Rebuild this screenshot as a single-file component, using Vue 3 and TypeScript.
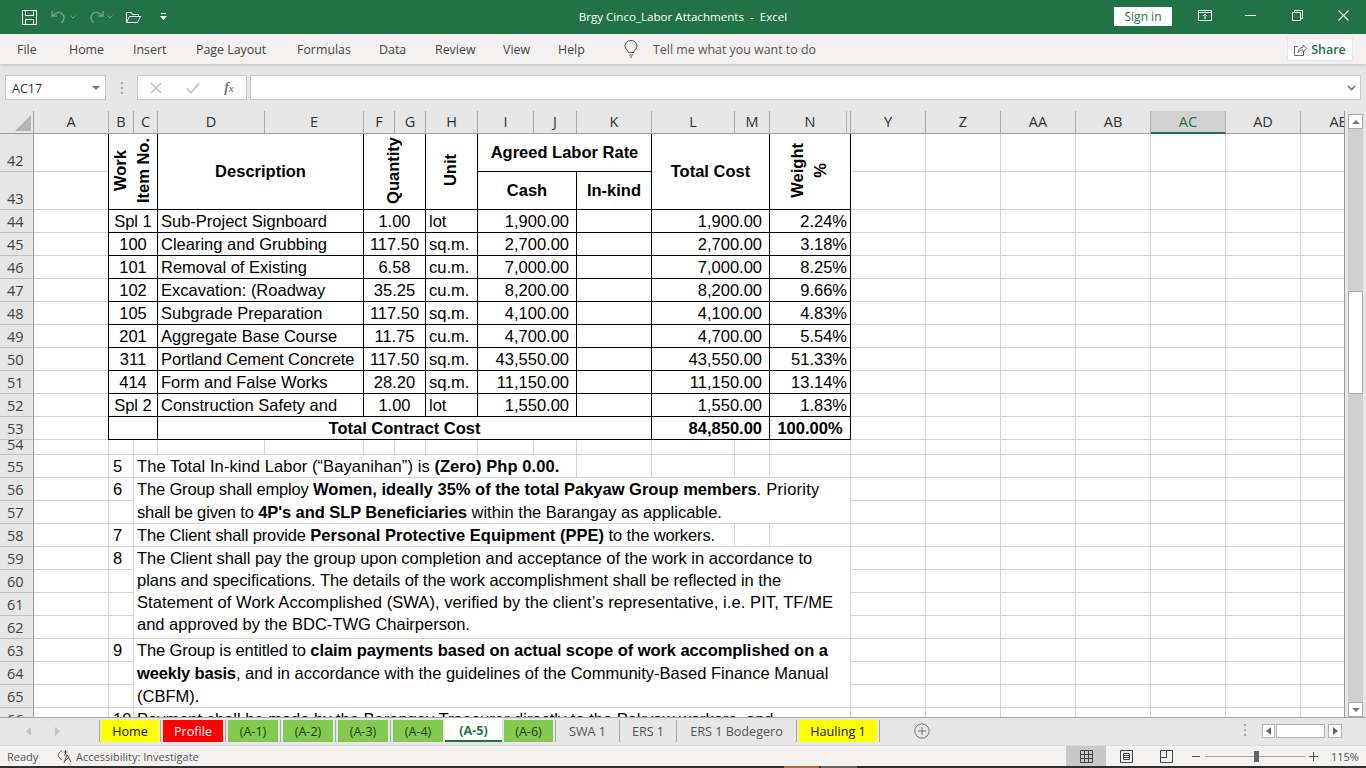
<script setup lang="ts">
interface Seg { t: string; b?: boolean; ls?: number }
interface Merged {
  c: [number, number]
  r: [number, number]
  cls: string
  lines: Seg[][]
}

const colWidths: number[] = [34, 75, 25, 24, 107, 99, 31, 31, 52, 56, 43, 75, 83, 35, 81, 75, 75, 75, 75, 75, 75, 75]
const colNames: string[] = ['A', 'B', 'C', 'D', 'E', 'F', 'G', 'H', 'I', 'J', 'K', 'L', 'M', 'N', 'Y', 'Z', 'AA', 'AB', 'AC', 'AD', 'AE']
const rowNums: number[] = Array.from({ length: 25 }, (_, i) => 42 + i)
const rowH = (n: number): number => (n === 42 || n === 43 ? 38 : n === 54 ? 15 : 23)

const gridTemplate = {
  gridTemplateColumns: colWidths.map((w) => `${w}px`).join(' '),
  gridTemplateRows: ['23px', ...rowNums.map((n) => `${rowH(n)}px`)].join(' ')
}

// Column numbers are grid lines: A = 2, B = 3 ... N = 15
const B = 3, C = 4, D = 5, F = 7, H = 9, I = 10, K = 12, L = 13, N = 15
const T = 'tbl'

const one = (t: string, b = false): Seg[][] => [[{ t, b }]]

const items: [string, string, string, string, string, string, string][] = [
  ['Spl 1', 'Sub-Project Signboard', '1.00', 'lot', '1,900.00', '1,900.00', '2.24%'],
  ['100', 'Clearing and Grubbing', '117.50', 'sq.m.', '2,700.00', '2,700.00', '3.18%'],
  ['101', 'Removal of Existing', '6.58', 'cu.m.', '7,000.00', '7,000.00', '8.25%'],
  ['102', 'Excavation: (Roadway', '35.25', 'cu.m.', '8,200.00', '8,200.00', '9.66%'],
  ['105', 'Subgrade Preparation', '117.50', 'sq.m.', '4,100.00', '4,100.00', '4.83%'],
  ['201', 'Aggregate Base Course', '11.75', 'cu.m.', '4,700.00', '4,700.00', '5.54%'],
  ['311', 'Portland Cement Concrete', '117.50', 'sq.m.', '43,550.00', '43,550.00', '51.33%'],
  ['414', 'Form and False Works', '28.20', 'sq.m.', '11,150.00', '11,150.00', '13.14%'],
  ['Spl 2', 'Construction Safety and', '1.00', 'lot', '1,550.00', '1,550.00', '1.83%']
]

const merged: Merged[] = [
  { c: [B, D], r: [42, 44], cls: `${T} first center rot bold`, lines: [[{ t: 'Work' }], [{ t: 'Item No.' }]] },
  { c: [D, F], r: [42, 44], cls: `${T} first center hd bold`, lines: one('Description') },
  { c: [F, H], r: [42, 44], cls: `${T} first center rot bold`, lines: one('Quantity') },
  { c: [H, I], r: [42, 44], cls: `${T} first center rot bold`, lines: one('Unit') },
  { c: [I, L], r: [42, 43], cls: `${T} first center hd bold`, lines: one('Agreed Labor Rate') },
  { c: [I, K], r: [43, 44], cls: `${T} center hd bold`, lines: one('Cash') },
  { c: [K, L], r: [43, 44], cls: `${T} center hd bold`, lines: one('In-kind') },
  { c: [L, N], r: [42, 44], cls: `${T} first center hd bold`, lines: one('Total Cost') },
  { c: [N, N + 1], r: [42, 44], cls: `${T} first center rot bold`, lines: [[{ t: 'Weight' }], [{ t: '%' }]] }
]

items.forEach((it, i) => {
  const r = 44 + i
  const row = (c: [number, number], cls: string, t: string, ls?: number): Merged => ({ c, r: [r, r + 1], cls: `${T} ${cls}`, lines: [[{ t, ls }]] })
  merged.push(
    row([B, D], 'center', it[0]),
    row([D, F], 'left', it[1], it[1].startsWith('Portland') ? -0.08 : undefined),
    row([F, H], 'center', it[2]),
    row([H, I], 'left', it[3]),
    row([I, K], 'right wide', it[4]),
    row([K, L], 'left', ''),
    row([L, N], 'right wide', it[5]),
    row([N, N + 1], 'right', it[6])
  )
})

merged.push(
  { c: [B, D], r: [53, 54], cls: `${T} center`, lines: one('') },
  { c: [D, L], r: [53, 54], cls: `${T} center bold`, lines: one('Total Contract Cost') },
  { c: [L, N], r: [53, 54], cls: `${T} right wide bold`, lines: one('84,850.00') },
  { c: [N, N + 1], r: [53, 54], cls: `${T} center bold`, lines: one('100.00%') },

  { c: [C, K + 0], r: [55, 56], cls: 'note', lines: [[{ t: 'The Total In-kind Labor (“Bayanihan”) is ', ls: 0.08 }, { t: '(Zero) Php 0.00.', b: true, ls: 0.08 }]] },
  {
    c: [C, N + 1], r: [56, 58], cls: 'note', lines: [
      [{ t: 'The Group shall employ ', ls: -0.16 }, { t: 'Women, ideally 35% of the total Pakyaw Group members', b: true }, { t: '. Priority', ls: 0.25 }],
      [{ t: 'shall be given to ', ls: -0.15 }, { t: "4P's and SLP Beneficiaries", b: true, ls: -0.08 }, { t: ' within the Barangay as applicable.' }]
    ]
  },
  { c: [C, L + 1], r: [58, 59], cls: 'note', lines: [[{ t: 'The Client shall provide ', ls: -0.15 }, { t: 'Personal Protective Equipment (PPE)', b: true, ls: 0.04 }, { t: ' to the workers.', ls: -0.12 }]] },
  {
    c: [C, N + 1], r: [59, 63], cls: 'note tight', lines: [
      [{ t: 'The Client shall pay the group upon completion and acceptance of the work in accordance to', ls: -0.02 }],
      [{ t: 'plans and specifications. The details of the work accomplishment shall be reflected in the', ls: -0.045 }],
      [{ t: 'Statement of Work Accomplished (SWA), verified by the client’s representative, i.e. PIT, TF/ME', ls: 0.075 }],
      [{ t: 'and approved by the BDC-TWG Chairperson.' }]
    ]
  },
  {
    c: [C, N + 1], r: [63, 66], cls: 'note', lines: [
      [{ t: 'The Group is entitled to ', ls: -0.11 }, { t: 'claim payments based on actual scope of work accomplished on a', b: true, ls: -0.07 }],
      [{ t: 'weekly basis', b: true, ls: -0.17 }, { t: ', and in accordance with the guidelines of the Community-Based Finance Manual' }],
      [{ t: '(CBFM).' }]
    ]
  },
  { c: [C, N + 1], r: [66, 67], cls: 'note', lines: [[{ t: 'Payment shall be made by the Barangay Treasurer directly to the Pakyaw workers, and' }]] }
)

const numbers: [number, string][] = [[55, '5'], [56, '6'], [58, '7'], [59, '8'], [63, '9'], [66, '10']]
numbers.forEach(([r, t]) => merged.push({ c: [B, C], r: [r, r + 1], cls: 'num', lines: one(t) }))

const placed = merged.map((m) => ({
  ...m,
  area: { gridColumn: `${m.c[0]} / ${m.c[1]}`, gridRow: `${m.r[0] - 40} / ${m.r[1] - 40}` }
}))

const spacing = (s: Seg) => (s.ls ? { letterSpacing: `${s.ls}px` } : undefined)

const ribbonTabs: string[] = ['File', 'Home', 'Insert', 'Page Layout', 'Formulas', 'Data', 'Review', 'View', 'Help']

interface Tab { label: string; kind: string }
const tabs: Tab[] = [
  { label: 'Home', kind: 'yellow first-tab' },
  { label: 'Profile', kind: 'red' },
  { label: '(A-1)', kind: 'green' },
  { label: '(A-2)', kind: 'green' },
  { label: '(A-3)', kind: 'green' },
  { label: '(A-4)', kind: 'green noline' },
  { label: '(A-5)', kind: 'active noline' },
  { label: '(A-6)', kind: 'green' },
  { label: 'SWA 1', kind: 'plain' },
  { label: 'ERS 1', kind: 'plain' },
  { label: 'ERS 1 Bodegero', kind: 'plain' },
  { label: 'Hauling 1', kind: 'yellow' }
]
</script>

<template>
  <div class="app">
    <header class="titlebar">
      <div class="qat">
        <svg class="i-save" width="17" height="17" viewBox="0 0 17 17" fill="none" stroke="#fff" stroke-width="1">
          <path d="M1.5 1.5h14v14h-14z" />
          <path d="M4.5 1.5v5h8v-5M4.5 15.5v-5h8v5" />
        </svg>
        <svg class="i-undo" width="18" height="17" viewBox="0 0 18 17" fill="none" stroke="#6fa488" stroke-width="1.3">
          <path d="M2 2v5h5M2.5 7C5 3 10 2.5 12.5 5c2.500 2.500 1.500 6-1 9" />
        </svg>
        <svg class="i-chev" width="6" height="4" viewBox="0 0 6 4" fill="none" stroke="#6fa488"><path d="M.5.5 3 3 5.500.5" /></svg>
        <svg class="i-redo" width="18" height="17" viewBox="0 0 18 17" fill="none" stroke="#6fa488" stroke-width="1.3">
          <path d="M16 2v5h-5M15.500 7C13 3 8 2.500 5.500 5c-2.500 2.500-1.500 6 1 9" />
        </svg>
        <svg class="i-chev" width="6" height="4" viewBox="0 0 6 4" fill="none" stroke="#6fa488"><path d="M.5.5 3 3 5.500.5" /></svg>
        <svg class="i-open" width="17" height="13" viewBox="0 0 17 13" fill="none" stroke="#fff" stroke-width="1">
          <path d="M1.500 11.500v-10h5l1 2h6v2M1.500 11.500h11l3-6h-11z" />
        </svg>
        <svg class="i-cust" width="7" height="8" viewBox="0 0 7 8" fill="#fff"><path d="M1 0h5v1H1zM0 3h7L3.500 7z" /></svg>
      </div>
      <div class="doc-title">Brgy Cinco_Labor Attachments&nbsp; -&nbsp; Excel</div>
      <div class="win">
        <button class="signin">Sign in</button>
        <svg class="i-display" width="14" height="11" viewBox="0 0 14 11" fill="none" stroke="#fff"><path d="M.5.5h13v10H.5zM.5 2.500h13M7 9V4.500M5 6l2-2 2 2" /></svg>
        <svg class="i-min" width="11" height="1" viewBox="0 0 11 1"><path d="M0 0h11v1H0z" fill="#fff" /></svg>
        <svg class="i-max" width="11" height="11" viewBox="0 0 11 11" fill="none" stroke="#fff"><path d="M.5 2.500h8v8h-8zM2.500 2.500v-2h8v8h-2" /></svg>
        <svg class="i-close" width="11" height="11" viewBox="0 0 11 11" fill="none" stroke="#fff" stroke-width="1.100"><path d="M.5.5l10 10M10.500.5l-10 10" /></svg>
      </div>
    </header>

    <nav class="ribbon">
      <div class="rtabs">
        <span v-for="t in ribbonTabs" :key="t">{{ t }}</span>
      </div>
      <svg class="i-bulb" width="14" height="18" viewBox="0 0 14 18" fill="none" stroke="#555">
        <path d="M4.500 12.500C4 10 1 9 1 6a6 5.500 0 0 1 12 0c0 3-3 4-3.500 6.500zM5 15h4M6 17h2" />
      </svg>
      <span class="tell">Tell me what you want to do</span>
      <button class="share">
        <svg width="13" height="13" viewBox="0 0 13 13" fill="none" stroke="#666"><path d="M4 3.500H.5v9h9V9M4 9.500c0-3 2-5 5-5V2l3.500 3.500L9 9V6.800c-2 0-4 1-5 2.700z" /></svg>
        <span>Share</span>
      </button>
    </nav>

    <section class="fbar">
      <div class="namebox">
        <span>AC17</span>
        <i class="caret"></i>
      </div>
      <div class="grip"><i></i><i></i><i></i></div>
      <div class="fxbox">
        <svg width="12" height="12" viewBox="0 0 12 12" fill="none" stroke="#bdbdbd" stroke-width="1.300"><path d="M1 1l10 10M11 1 1 11" /></svg>
        <svg width="14" height="12" viewBox="0 0 14 12" fill="none" stroke="#bdbdbd" stroke-width="1.600"><path d="M1 6.500 5 10.500 13 1.500" /></svg>
        <span class="fx">f<sub>x</sub></span>
      </div>
      <div class="finput">
        <svg width="9" height="6" viewBox="0 0 9 6" fill="none" stroke="#777" stroke-width="1.600"><path d="M1 1l3.500 3.500L8 1" /></svg>
      </div>
    </section>

    <main class="work">
      <div class="sheet">
        <div class="grid" :style="gridTemplate">
          <div class="corner"><i></i></div>
          <div v-for="c in colNames" :key="c" class="colhead" :class="{ sel: c === 'AC', hid: c === 'N' }">{{ c }}</div>
          <template v-for="r in rowNums" :key="r">
            <div class="rowhead" :class="{ short: r === 54 }">{{ r }}</div>
            <div v-for="c in colNames" :key="c" class="cell"></div>
          </template>
        </div>
        <div class="grid overlay" :style="gridTemplate">
          <div v-for="(m, i) in placed" :key="i" class="m" :class="m.cls" :style="m.area">
            <div class="inner">
              <div v-for="(ln, j) in m.lines" :key="j" class="ln"><span v-for="(s, k) in ln" :key="k" :class="{ b: s.b }" :style="spacing(s)">{{ s.t }}</span></div>
            </div>
          </div>
        </div>
      </div>
      <aside class="vscroll">
        <div class="sbtn"><i class="up"></i></div>
        <div class="track">
          <div class="thumb"></div>
        </div>
        <div class="sbtn"><i class="down"></i></div>
      </aside>
    </main>

    <section class="tabbar">
      <div class="tabnav">
        <svg width="6" height="9" viewBox="0 0 6 9" fill="#c4c4c4"><path d="M5 0v9L0 4.500z" /></svg>
        <svg width="6" height="9" viewBox="0 0 6 9" fill="#c4c4c4"><path d="M0 0v9l5-4.500z" /></svg>
      </div>
      <div class="tabs">
        <div v-for="t in tabs" :key="t.label" class="tab" :class="t.kind"><span>{{ t.label }}</span></div>
      </div>
      <svg class="add" width="16" height="16" viewBox="0 0 16 16" fill="none" stroke="#777"><circle cx="8" cy="8" r="7.200" /><path d="M8 4v8M4 8h8" /></svg>
      <div class="grip tabgrip"><i></i><i></i><i></i></div>
      <div class="hscroll">
        <div class="hbtn"><svg width="5" height="8" viewBox="0 0 5 8" fill="#666"><path d="M5 0v8L0 4z" /></svg></div>
        <div class="hthumb"></div>
        <div class="hbtn right"><svg width="5" height="8" viewBox="0 0 5 8" fill="#666"><path d="M0 0v8l5-4z" /></svg></div>
      </div>
    </section>

    <footer class="status">
      <span class="ready">Ready</span>
      <svg class="i-acc" width="16" height="15" viewBox="0 0 16 15" fill="none" stroke="#555">
        <path d="M5 1.500C2.500 3 1 5 1 7l3.500 4M8.500 1v4M6.500 3h4M7 6h3l4 7M10 6 7 14M12.500 7.500l-5 5" />
      </svg>
      <span class="acc">Accessibility: Investigate</span>
      <div class="views">
        <div class="view on">
          <svg width="13" height="13" viewBox="0 0 13 13" fill="none" stroke="#444"><path d="M.5.500h12v12H.5zM4.500.5v12M8.500.5v12M.5 4.500h12M.5 8.500h12" /></svg>
        </div>
        <div class="view">
          <svg width="13" height="13" viewBox="0 0 13 13" fill="none" stroke="#444"><path d="M.5.500h12v12H.5zM3.500 3.500h6v6h-6zM3.500 5.500h6M3.500 7.500h6" /></svg>
        </div>
        <div class="view">
          <svg width="13" height="13" viewBox="0 0 13 13" fill="none" stroke="#444"><path d="M.5.500h12v12H.5zM.5 7.500h6v-7" /></svg>
        </div>
      </div>
      <div class="zoom">
        <i class="minus"></i>
        <div class="slider"><b></b></div>
        <svg width="9" height="9" viewBox="0 0 9 9" stroke="#555" fill="none"><path d="M4.500 0v9M0 4.500h9" /></svg>
        <span class="pct">115%</span>
      </div>
    </footer>

    <div class="taskbar"><i class="orange"></i><i class="grey"></i></div>
  </div>
</template>

<style>
html, body { margin: 0; padding: 0; overflow: hidden; }
</style>

<style scoped>
.app {
  width: 1366px;
  height: 768px;
  display: flex;
  flex-direction: column;
  background: #e6e6e6;
  font-family: "Open Sans", "Noto Sans", sans-serif;
  overflow: hidden;
}
button { font-family: inherit; cursor: default; }

/* title bar */
.titlebar {
  height: 34px;
  flex: none;
  background: #217346;
  display: grid;
  grid-template-columns: 1fr auto 1fr;
  align-items: center;
}
.qat { display: flex; align-items: center; padding-left: 21px; }
.i-undo { margin-left: 12px; }
.i-chev { margin-left: 2px; }
.i-redo { margin-left: 11px; }
.i-open { margin-left: 12px; }
.i-cust { margin-left: 18px; }
.doc-title { color: #fff; font-size: 11.6px; white-space: nowrap; margin-top: -2px; }
.win { display: flex; align-items: center; justify-content: flex-end; height: 34px; }
.signin {
  width: 58px; height: 19px; border: 0; padding: 0; background: #fff; color: #217346;
  font-size: 12px; line-height: 19px; margin-right: 26px; margin-top: -1px;
}
.i-display { margin-right: 33px; margin-top: -3px; }
.i-min { margin-right: 36px; margin-top: -3px; }
.i-max { margin-right: 35px; margin-top: -3px; }
.i-close { margin-right: 17px; margin-top: -3px; }

/* ribbon */
.ribbon {
  height: 30px;
  flex: none;
  background: #f3f2f1;
  display: flex;
  align-items: center;
  color: #444;
  font-size: 12.4px;
  box-shadow: 0 2px 3px rgba(0, 0, 0, .13);
  position: relative;
  z-index: 2;
}
.rtabs {
  display: grid;
  grid-template-columns: 52px 64px 63px 101px 82px 56px 68px 55px 65px;
  padding-left: 17px;
  width: 606px;
  white-space: nowrap;
}
.i-bulb { margin-left: 1px; }
.tell { margin-left: 15px; color: #555; }
.share {
  margin-left: auto; margin-right: 13px; width: 66px; height: 23px; border: 1px solid #e8e6e4;
  background: #fff; color: #217346; font-size: 12.5px; font-weight: 600;
  display: flex; align-items: center; justify-content: center; gap: 4px; padding: 0;
}

/* formula bar */
.fbar {
  height: 47px;
  flex: none;
  display: flex;
  align-items: flex-start;
  padding: 11px 5px 0;
  box-sizing: border-box;
}
.namebox, .fxbox, .finput {
  height: 25px; box-sizing: border-box; background: #fff; border: 1px solid #c8c8c8;
  display: flex; align-items: center;
}
.namebox { width: 101px; padding: 1px 5px 0 6px; justify-content: space-between; font-size: 12.5px; color: #333; }
.caret { width: 0; height: 0; border: 4px solid transparent; border-top: 4px solid #777; border-bottom: 0; }
.grip { display: flex; flex-direction: column; gap: 3px; }
.grip i { width: 2px; height: 2px; background: #a8a8a8; display: block; }
.fbar .grip { width: 2px; margin: 7px 14px 0 15px; }
.fxbox { width: 110px; padding: 0 12px 0 12px; gap: 0; justify-content: space-between; }
.fx { font-family: "Liberation Serif", serif; font-style: italic; font-size: 14px; font-weight: 700; color: #777; line-height: 1; }
.fx sub { font-size: 10px; vertical-align: baseline; }
.finput { width: 1112px; margin-left: 3px; justify-content: flex-end; padding-right: 4px; }

/* sheet */
.work { height: 606px; flex: none; display: flex; overflow: hidden; }
.sheet {
  width: 1345px;
  height: 606px;
  box-sizing: border-box;
  border-right: 1px solid #9b9b9b;
  overflow: hidden;
  position: relative;
  background: #fff;
}
.grid { display: grid; width: 1400px; }
.overlay { position: absolute; left: 0; top: 0; }
.corner {
  background: #e6e6e6; border-right: 1px solid #a5a5a5; border-bottom: 1px solid #9c9c9c;
  box-sizing: border-box; display: flex; align-items: flex-end; justify-content: flex-end; padding: 0 2px 2px 0;
}
.corner i { width: 0; height: 0; border-left: 16px solid transparent; border-bottom: 16px solid #b4b4b4; display: block; }
.colhead {
  background: #e6e6e6; border-right: 1px solid #ababab; border-bottom: 1px solid #9c9c9c;
  box-sizing: border-box; text-align: center; font-size: 14.5px; line-height: 22px; color: #333; overflow: hidden;
}
.colhead.hid { box-shadow: inset -3px 0 0 #e6e6e6, inset -4px 0 0 #b5b5b5; }
.colhead.sel { background: #d2d2d2; color: #217346; border-bottom: 2px solid #217346; }
.rowhead {
  background: #e6e6e6; border-right: 1px solid #9c9c9c; border-bottom: 1px solid #c0c0c0;
  box-sizing: border-box; font-size: 14.5px; color: #444; padding-left: 7px; padding-right: 0;
  display: flex; align-items: flex-end; line-height: 21px; overflow: hidden;
}
.rowhead.short { align-items: flex-start; line-height: 10px; }
.cell { border-right: 1px solid #d4d4d4; border-bottom: 1px solid #d4d4d4; box-sizing: border-box; }

/* placed cells */
.m {
  background: #fff; color: #000; box-sizing: border-box; overflow: hidden;
  font-family: "Liberation Sans", Arial, sans-serif; font-size: 16.5px;
  display: flex; align-items: center; white-space: pre;
}
.inner { width: 100%; }
.b { font-weight: 700; }
.ln { line-height: 22px; }
.tbl { border: 1px solid #000; margin: -1px 0 0 -1px; }
.tbl.first { border-top: 0; margin-top: 0; }
.tbl.hd { padding-bottom: 2px; }
.tbl.center { justify-content: center; text-align: center; }
.tbl.left { padding-left: 3px; }
.tbl.right { text-align: right; padding-right: 3px; }
.tbl.right.wide { padding-right: 7px; }
.tbl.bold { font-weight: 700; }
.tbl.rot .inner {
  writing-mode: vertical-rl; transform: rotate(180deg); width: auto; text-align: center; margin: -2px 0 0 -2px;
}
.tbl.rot .ln { line-height: 23px; }
.num, .note { border-right: 1px solid #d4d4d4; border-bottom: 1px solid #d4d4d4; align-items: flex-start; }
.num { padding-left: 4px; }
.num .ln, .note .ln { line-height: 23px; }
.note { padding-left: 3px; }
.note.tight .ln { line-height: 22px; }

/* vertical scrollbar */
.vscroll {
  width: 21px; box-sizing: border-box; padding: 3px 3px 0 3px;
  display: flex; flex-direction: column;
}
.sbtn {
  height: 15px; flex: none; background: #fff; border: 1px solid #ababab; box-sizing: border-box;
  display: flex; align-items: center; justify-content: center;
}
.sbtn i { width: 0; height: 0; border: 4px solid transparent; display: block; }
.sbtn .up { border-bottom: 4px solid #777; border-top: 0; }
.sbtn .down { border-top: 4px solid #777; border-bottom: 0; }
.track { flex: 1; background: #d0d0d0; padding-top: 162px; }
.thumb { height: 103px; box-sizing: border-box; background: #fff; border: 1px solid #ababab; }

/* tabs */
.tabbar {
  height: 28px; flex: none; box-sizing: border-box; border-top: 1px solid #a6a6a6; background: #e6e6e6;
  display: flex; align-items: stretch; font-size: 12.6px; position: relative;
}
.tabnav { width: 100px; box-sizing: border-box; display: flex; align-items: center; gap: 23px; padding-left: 26px; border-right: 1px solid #a8a8a8; height: 22px; margin-top: 2px; }
.tabs {
  display: grid;
  grid-template-columns: 61px 65px 55px 55px 55px 54px 57px 54px 64px 57px 120px 83px;
  height: 24px;
  margin-top: 2px;
  box-sizing: border-box;
}
.tab { display: flex; height: 22px; border-right: 1px solid #a8a8a8; box-sizing: border-box; color: #444; white-space: nowrap; }
.tab span { flex: 1; margin: 0 2px; display: flex; align-items: center; justify-content: center; }
.tab.first-tab span { margin: 0 1px; }
.tab.noline { border-right: 0; }
.tab.yellow span { background: #ffff00; color: #111; }
.tab.red span { background: #ff0000; color: #fff; }
.tab.green span { background: #84ca50; color: #1f3d0c; }
.tab.plain span { color: #555; }
.tab.active { background: #fff; height: 24px; margin-top: -2px; padding-top: 2px; border-bottom: 2px solid #217346; }
.tab.active span { color: #217346; font-weight: 700; margin: 0; }
.add { margin: 5px 0 0 34px; }
.tabgrip { width: 2px; margin: 6px 0 0 314px; }
.hscroll { display: flex; align-items: flex-start; margin: 6px 0 0 16px; }
.hbtn {
  width: 13px; height: 14px; background: #fff; border: 1px solid #b5b5b5; box-sizing: border-box;
  display: flex; align-items: center; justify-content: center;
}
.hthumb { width: 49px; height: 14px; margin-left: 1px; background: #fff; border: 1px solid #b5b5b5; box-sizing: border-box; }
.hbtn.right { margin-left: 3px; width: 14px; }

/* status */
.status {
  height: 21px; flex: none; background: #f3f2f1; display: flex; align-items: center;
  font-size: 11px; color: #555; border-top: 1px solid #dcdcdc; box-sizing: border-box;
}
.ready { margin-left: 7px; width: 50px; }
.i-acc { flex: none; }
.acc { margin-left: 3px; }
.views { margin-left: auto; display: flex; height: 20px; }
.view { width: 40px; display: flex; align-items: center; justify-content: center; }
.view.on { background: #c8c8c8; }
.zoom { display: flex; align-items: center; width: 180px; flex: none; box-sizing: border-box; padding-left: 6px; }
.minus { width: 8px; height: 1px; background: #555; display: block; flex: none; }
.slider { width: 100px; height: 1px; background: #aaa; margin: 0 4px 0 5px; position: relative; flex: none; }
.slider b { position: absolute; left: 49px; top: -5px; width: 5px; height: 11px; background: #666; display: block; }
.pct { margin-left: 13px; white-space: nowrap; }

.taskbar { height: 2px; flex: none; background: #2f2f2f; display: flex; padding-left: 784px; }
.orange { width: 35px; background: #b36a2c; display: block; }
.grey { width: 36px; margin-left: 2px; background: #666; display: block; }
</style>
